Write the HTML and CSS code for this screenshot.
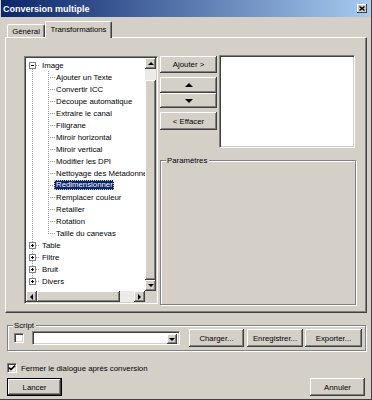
FILE: index.html
```html
<!DOCTYPE html>
<html lang="fr">
<head>
    <meta charset="UTF-8">
    <meta name="viewport" content="width=device-width, initial-scale=1.0">
    <title>Conversion multiple</title>
    <link rel="stylesheet" href="styles.css">
</head>
<body>
<div class="window">
    <div class="titlebar">
        <span class="title">Conversion multiple</span>
        <span class="close-btn">
            <svg width="6" height="5" viewBox="0 0 6 5"><path d="M0.5 0.5 L5.5 4.5 M5.5 0.5 L0.5 4.5" stroke="#000" stroke-width="1.4"/></svg>
        </span>
    </div>

    <div class="tabs">
        <div class="tab">Général</div>
        <div class="tab active">Transformations</div>
    </div>

    <div class="panel">
        <!-- tree of transformations -->
        <div class="tree">
            <div class="tree-items">
                <div class="node root first"><span class="gutter"><span class="box minus"></span></span><span class="label">Image</span></div>
                <div class="node child"><span class="gutter"></span><span class="branch"></span><span class="label">Ajouter un Texte</span></div>
                <div class="node child"><span class="gutter"></span><span class="branch"></span><span class="label">Convertir ICC</span></div>
                <div class="node child"><span class="gutter"></span><span class="branch"></span><span class="label">Découpe automatique</span></div>
                <div class="node child"><span class="gutter"></span><span class="branch"></span><span class="label">Extraire le canal</span></div>
                <div class="node child"><span class="gutter"></span><span class="branch"></span><span class="label">Filigrane</span></div>
                <div class="node child"><span class="gutter"></span><span class="branch"></span><span class="label">Miroir horizontal</span></div>
                <div class="node child"><span class="gutter"></span><span class="branch"></span><span class="label">Miroir vertical</span></div>
                <div class="node child"><span class="gutter"></span><span class="branch"></span><span class="label">Modifier les DPI</span></div>
                <div class="node child"><span class="gutter"></span><span class="branch"></span><span class="label">Nettoyage des Métadonnées</span></div>
                <div class="node child"><span class="gutter"></span><span class="branch"></span><span class="label selected">Redimensionner</span></div>
                <div class="node child"><span class="gutter"></span><span class="branch"></span><span class="label">Remplacer couleur</span></div>
                <div class="node child"><span class="gutter"></span><span class="branch"></span><span class="label">Retailler</span></div>
                <div class="node child"><span class="gutter"></span><span class="branch"></span><span class="label">Rotation</span></div>
                <div class="node child last"><span class="gutter"></span><span class="branch"></span><span class="label">Taille du canevas</span></div>
                <div class="node root"><span class="gutter"><span class="box plus"></span></span><span class="label">Table</span></div>
                <div class="node root"><span class="gutter"><span class="box plus"></span></span><span class="label">Filtre</span></div>
                <div class="node root"><span class="gutter"><span class="box plus"></span></span><span class="label">Bruit</span></div>
                <div class="node root final"><span class="gutter"><span class="box plus"></span></span><span class="label">Divers</span></div>
            </div>
            <div class="vscroll">
                <span class="sb-btn"><i class="arrow up"></i></span>
                <span class="sb-track"></span>
                <span class="sb-thumb"></span>
                <span class="sb-btn"><i class="arrow down"></i></span>
            </div>
            <div class="hscroll">
                <span class="sb-btn"><i class="arrow left"></i></span>
                <span class="sb-thumb"></span>
                <span class="sb-track"></span>
                <span class="sb-btn"><i class="arrow right"></i></span>
            </div>
            <div class="sb-corner"></div>
        </div>

        <div class="side">
            <div class="side-top">
                <div class="btn-col">
                    <button class="btn btn-add">Ajouter &gt;</button>
                    <button class="btn btn-up"><i class="arrow up big"></i></button>
                    <button class="btn btn-down"><i class="arrow down big"></i></button>
                    <button class="btn btn-del">&lt; Effacer</button>
                </div>
                <div class="listbox"></div>
            </div>
            <div class="group params">
                <span class="group-title">Paramètres</span>
            </div>
        </div>
    </div>

    <div class="group script">
        <span class="group-title">Script</span>
        <div class="script-row">
            <span class="check"></span>
            <div class="combo">
                <span class="combo-btn"><i class="arrow down"></i></span>
            </div>
            <button class="btn btn-load">Charger...</button>
            <button class="btn btn-save">Enregistrer...</button>
            <button class="btn btn-export">Exporter...</button>
        </div>
    </div>

    <div class="option">
        <span class="check">
            <svg width="8" height="8" viewBox="0 0 8 8"><path d="M1 3.6 L3 5.6 L7 1.6" fill="none" stroke="#000" stroke-width="1.6"/></svg>
        </span>
        <span>Fermer le dialogue après conversion</span>
    </div>

    <div class="actions">
        <button class="btn btn-default">Lancer</button>
        <button class="btn btn-cancel">Annuler</button>
    </div>
</div>
</body>
</html>
```

FILE: styles.css
```css
* {
    box-sizing: border-box;
}
body {
    margin: 0;
    font-family: "Liberation Sans", Arial, sans-serif;
    font-size: 7.8px;
    color: #000;
    background: #d4d0c8;
}
.window {
    width: 372px;
    height: 400px;
    padding: 0 1px;
    background: #d4d0c8;
    border-right: 1px solid #404040;
    border-bottom: 1px solid #404040;
    overflow: hidden;
}

/* title bar */
.titlebar {
    height: 17px;
    display: flex;
    align-items: center;
    justify-content: space-between;
    padding: 0 3px 0 2px;
    background: linear-gradient(to right, #0a246a, #a6caf0);
}
.title {
    color: #fff;
    font-weight: bold;
    font-size: 9px;
}
.close-btn {
    width: 10px;
    height: 9px;
    display: flex;
    align-items: center;
    justify-content: center;
    background: #d4d0c8;
    box-shadow: inset -1px -1px #404040, inset 1px 1px #fff;
}

/* tabs */
.tabs {
    height: 16px;
    margin-top: 4px;
    padding-left: 6px;
    display: flex;
    align-items: flex-end;
}
.tab {
    width: 38px;
    height: 13px;
    display: flex;
    align-items: center;
    justify-content: center;
    border-top: 1px solid #fff;
    border-left: 1px solid #fff;
    border-right: 1px solid #404040;
    border-radius: 2px 2px 0 0;
    box-shadow: inset -1px 0 #808080;
}
.tab.active {
    width: 67px;
    height: 17px;
    margin-bottom: -1px;
    padding-bottom: 2px;
    position: relative;
    z-index: 1;
    background: #d4d0c8;
}
.panel {
    width: 362px;
    height: 276px;
    margin-left: 4px;
    padding: 18px 0 0 18px;
    display: flex;
    align-items: flex-start;
    gap: 2px;
    border-top: 1px solid #fff;
    border-left: 1px solid #fff;
    border-right: 1px solid #404040;
    border-bottom: 1px solid #404040;
    box-shadow: inset -1px -1px #808080;
}

/* sunken boxes */
.tree, .listbox, .combo, .check {
    background: #fff;
    border-top: 1px solid #808080;
    border-left: 1px solid #808080;
    border-right: 1px solid #fff;
    border-bottom: 1px solid #fff;
    box-shadow: inset 1px 1px #404040, inset -1px -1px #d4d0c8;
}

/* tree */
.tree {
    width: 134px;
    height: 248px;
    padding: 1px;
    display: grid;
    grid-template-columns: 1fr 11px;
    grid-template-rows: 1fr 11px;
}
.tree-items {
    overflow: hidden;
    padding-top: 1px;
}
.node {
    height: 12px;
    display: flex;
    align-items: center;
    white-space: nowrap;
}
.gutter, .branch {
    height: 12px;
    flex: none;
    display: flex;
    align-items: center;
    background-repeat: no-repeat;
}
.gutter {
    width: 14px;
    background-image: repeating-linear-gradient(to bottom, #999 0 1px, transparent 1px 2px);
    background-position: 6px 0;
    background-size: 1px 12px;
}
.root .gutter {
    background-image: repeating-linear-gradient(to right, #999 0 1px, transparent 1px 2px),
                      repeating-linear-gradient(to bottom, #999 0 1px, transparent 1px 2px);
    background-position: 6px 6px, 6px 0;
    background-size: 8px 1px, 1px 12px;
}
.root.first .gutter {
    background-position: 6px 6px, 6px 6px;
    background-size: 8px 1px, 1px 6px;
}
.root.final .gutter {
    background-size: 8px 1px, 1px 6px;
}
.branch {
    width: 15px;
    background-image: repeating-linear-gradient(to right, #999 0 1px, transparent 1px 2px),
                      repeating-linear-gradient(to bottom, #999 0 1px, transparent 1px 2px);
    background-position: 8px 6px, 8px 0;
    background-size: 7px 1px, 1px 12px;
}
.child.last .branch {
    background-size: 7px 1px, 1px 7px;
}
.box {
    width: 7px;
    height: 7px;
    margin-left: 3px;
    border: 1px solid #808080;
    background: linear-gradient(#000, #000) center / 3px 1px no-repeat, #fff;
}
.box.plus {
    background: linear-gradient(#000, #000) center / 3px 1px no-repeat,
                linear-gradient(#000, #000) center / 1px 3px no-repeat, #fff;
}
.root .label {
    padding-left: 2px;
}
.child .label {
    padding-left: 1px;
}
.label.selected {
    height: 10px;
    line-height: 10px;
    padding-right: 1px;
    margin-left: -1px;
    padding-left: 2px;
    color: #fff;
    background: #0a246a;
    outline: 1px dotted #d4d0c8;
    outline-offset: -1px;
}

/* scrollbars */
.vscroll {
    display: flex;
    flex-direction: column;
}
.hscroll {
    display: flex;
}
.sb-btn, .sb-thumb, .sb-corner, .combo-btn, .btn {
    background: #d4d0c8;
    box-shadow: inset -1px -1px #404040, inset 1px 1px #fff, inset -2px -2px #808080;
}
.sb-btn {
    width: 11px;
    height: 11px;
    flex: none;
    display: flex;
    align-items: center;
    justify-content: center;
}
.vscroll .sb-track {
    height: 11px;
    background: #ecebe7;
}
.vscroll .sb-thumb {
    flex: 1;
}
.hscroll .sb-thumb {
    width: 83px;
}
.hscroll .sb-track {
    flex: 1;
    background: #ecebe7;
}
.sb-corner {
    box-shadow: none;
}
.arrow {
    display: block;
    width: 0;
    height: 0;
    border-style: solid;
    border-color: transparent;
}
.arrow.up {
    border-width: 0 3px 3px;
    border-bottom-color: #000;
}
.arrow.down {
    border-width: 3px 3px 0;
    border-top-color: #000;
}
.arrow.left {
    border-width: 3px 3px 3px 0;
    border-right-color: #000;
}
.arrow.right {
    border-width: 3px 0 3px 3px;
    border-left-color: #000;
}
.arrow.big.up {
    border-width: 0 4px 4px;
}
.arrow.big.down {
    border-width: 4px 4px 0;
}

/* right column */
.side {
    width: 196px;
    margin-top: -1px;
}
.side-top {
    display: flex;
    gap: 2px;
}
.btn-col {
    width: 57px;
    padding-top: 1px;
    display: flex;
    flex-direction: column;
}
.btn {
    border: none;
    padding: 0;
    margin: 0;
    font: inherit;
    color: #000;
    display: flex;
    align-items: center;
    justify-content: center;
}
.btn-add {
    height: 17px;
    margin-bottom: 4px;
}
.btn-up {
    height: 16px;
}
.btn-down {
    height: 15px;
}
.btn-del {
    height: 18px;
    margin-top: 4px;
}
.listbox {
    width: 136px;
    height: 93px;
}
.group {
    border: 1px solid #808080;
    box-shadow: inset 1px 1px #fff, 1px 1px #fff;
}
.group-title {
    display: block;
    width: max-content;
    margin: -5px 0 0 5px;
    padding: 0 2px 0 1px;
    line-height: 9px;
    background: #d4d0c8;
}
.params {
    height: 145px;
    margin-top: 12px;
}

/* script box */
.script {
    width: 359px;
    margin: 12px 0 0 6px;
    padding-bottom: 3px;
}
.script-row {
    height: 18px;
    margin-top: -1px;
    display: flex;
    align-items: center;
}
.check {
    width: 10px;
    height: 10px;
    flex: none;
    display: flex;
    align-items: center;
    justify-content: center;
}
.script-row .check {
    margin-left: 6px;
}
.combo {
    width: 148px;
    height: 14px;
    margin-left: 8px;
    padding: 2px;
    display: flex;
    justify-content: flex-end;
}
.combo-btn {
    width: 10px;
    height: 10px;
    display: flex;
    align-items: center;
    justify-content: center;
}
.btn-load, .btn-save, .btn-export {
    height: 18px;
}
.btn-load {
    width: 55px;
    margin-left: 9px;
}
.btn-save {
    width: 56px;
    margin-left: 3px;
}
.btn-export {
    width: 57px;
    margin-left: 2px;
}
.option {
    height: 10px;
    margin: 12px 0 0 6px;
    display: flex;
    align-items: center;
    gap: 4px;
}
.actions {
    margin-top: 5px;
    padding: 0 5px 0 6px;
    display: flex;
    justify-content: space-between;
}
.actions .btn {
    width: 55px;
    height: 18px;
}
.btn-default {
    border: 1px solid #000;
}
```
